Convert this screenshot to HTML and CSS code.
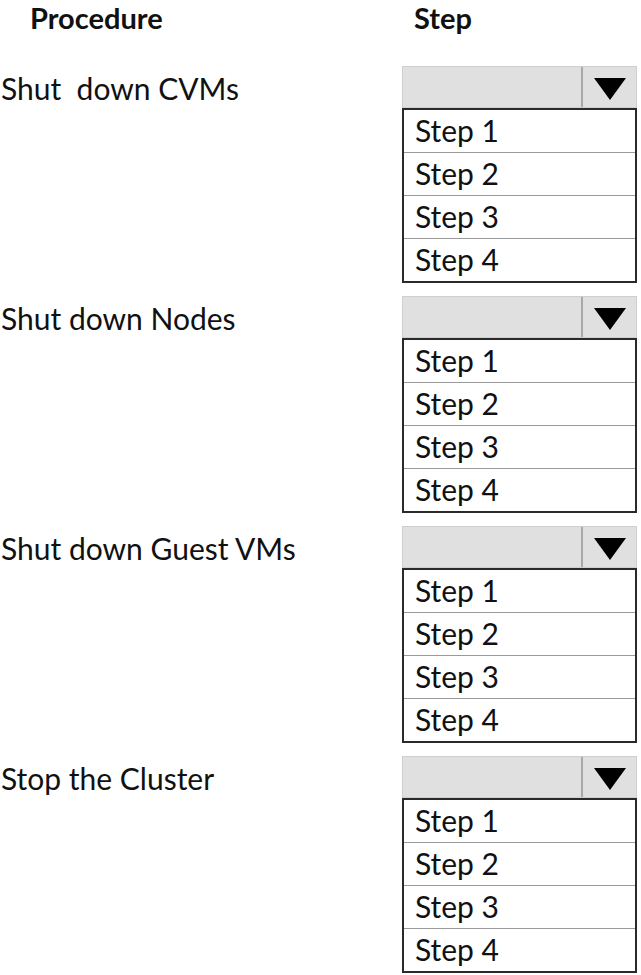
FILE: index.html
```html
<!DOCTYPE html>
<html>
<head>
<meta charset="utf-8">
<link rel="stylesheet" href="styles.css">
</head>
<body>
<div class="page">
  <div class="header">
    <div class="h-proc">Procedure</div>
    <div class="h-step">Step</div>
  </div>

  <div class="section">
    <div class="label">Shut&nbsp; down CVMs</div>
    <div class="dd">
      <div class="bar"><div class="field"></div><div class="btn"><span class="tri"></span></div></div>
      <ul class="list"><li>Step 1</li><li>Step 2</li><li>Step 3</li><li>Step 4</li></ul>
    </div>
  </div>

  <div class="section">
    <div class="label">Shut down Nodes</div>
    <div class="dd">
      <div class="bar"><div class="field"></div><div class="btn"><span class="tri"></span></div></div>
      <ul class="list"><li>Step 1</li><li>Step 2</li><li>Step 3</li><li>Step 4</li></ul>
    </div>
  </div>

  <div class="section">
    <div class="label">Shut down Guest VMs</div>
    <div class="dd">
      <div class="bar"><div class="field"></div><div class="btn"><span class="tri"></span></div></div>
      <ul class="list"><li>Step 1</li><li>Step 2</li><li>Step 3</li><li>Step 4</li></ul>
    </div>
  </div>

  <div class="section">
    <div class="label">Stop the Cluster</div>
    <div class="dd">
      <div class="bar"><div class="field"></div><div class="btn"><span class="tri"></span></div></div>
      <ul class="list"><li>Step 1</li><li>Step 2</li><li>Step 3</li><li>Step 4</li></ul>
    </div>
  </div>
</div>
</body>
</html>
```

FILE: styles.css
```css
html, body {
  margin: 0;
  padding: 0;
  background: #ffffff;
}
body {
  font-family: Lato, "Open Sans", sans-serif;
  color: #111;
  width: 641px;
  height: 975px;
  overflow: hidden;
}
.page {
  display: flex;
  flex-direction: column;
  gap: 12px;
}
.header {
  display: grid;
  grid-template-columns: 414px 1fr;
  height: 54px;
  font-weight: bold;
  font-size: 29px;
  line-height: 36px;
}
.h-proc {
  padding-left: 30px;
}
.section {
  display: grid;
  grid-template-columns: 402px 235px;
  height: 218px;
}
.label {
  font-size: 30px;
  line-height: 34px;
  padding-top: 5px;
  padding-left: 1px;
  white-space: nowrap;
}
.dd {
  display: flex;
  flex-direction: column;
}
.bar {
  display: flex;
  height: 42px;
  box-sizing: border-box;
  border: 1px solid #cfcfcf;
  background: #e0e0e0;
}
.field {
  flex: 1;
  border-right: 2px solid #a8a8a8;
}
.btn {
  width: 53px;
  display: flex;
  align-items: center;
  justify-content: center;
}
.tri {
  width: 0;
  height: 0;
  border-left: 16px solid transparent;
  border-right: 16px solid transparent;
  border-top: 22px solid #000;
  margin-top: 4px;
}
.list {
  list-style: none;
  margin: 0;
  padding: 0;
  border: 2px solid #2a2a2a;
  height: 175px;
  box-sizing: border-box;
  display: flex;
  flex-direction: column;
}
.list li {
  flex: 1;
  font-size: 30px;
  line-height: 34px;
  padding-left: 11px;
  padding-top: 3px;
  box-sizing: border-box;
  border-top: 1px solid #9a9a9a;
}
.list li:first-child {
  border-top: none;
}
```
